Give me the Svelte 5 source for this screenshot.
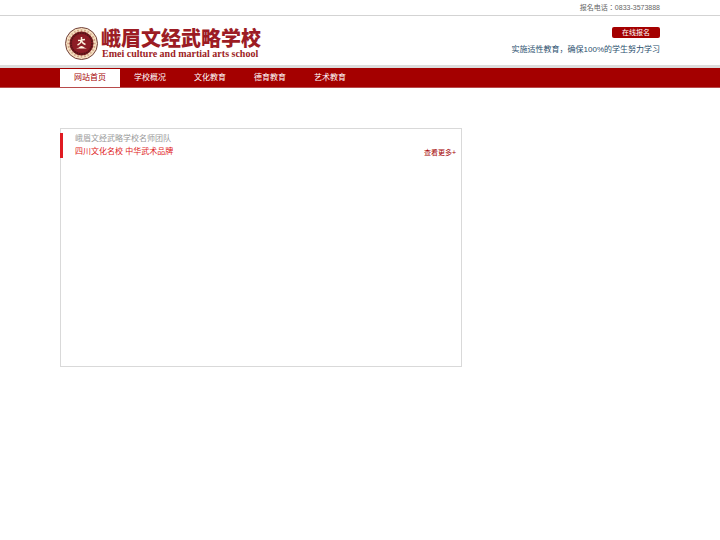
<script>
	const phone = '0833-3573888';
	const menu = ['网站首页', '学校概况', '文化教育', '德育教育', '艺术教育'];
	let current = $state(0);

	const ticks = Array.from({ length: 24 }, (_, i) => i * 15);
</script>

<div class="topbar">
	<div class="wrap">报名电话：{phone}</div>
</div>

<header>
	<div class="wrap head">
		<a class="logo" href="#home">
			<svg viewBox="0 0 66 66" aria-hidden="true">
				<circle cx="33" cy="33" r="32" fill="#f6dfc0" stroke="#70403a" stroke-width="2" />
				{#each ticks as angle}
					<path d="M31 6h4M33 5v5M31 9h4" stroke="#b98468" stroke-width="1" transform="rotate({angle} 33 33)" />
				{/each}
				<circle cx="33" cy="33" r="23" fill="#7c1920" stroke="#7c1920" stroke-width="2" />
				<circle cx="33" cy="33" r="21" fill="none" stroke="#4f1516" stroke-width="3" stroke-dasharray="3 2" />
				<circle cx="33" cy="33" r="19" fill="#8d1c25" />
				<path d="M33 20v6q-1 7-8 10M26 27l14-2M33 28q2 5 8 7" fill="none" stroke="#fff2df" stroke-width="3" />
				<path d="M22 43q6-1 8-4q3-2 6 0q3 3 8 4z" fill="#fff2df" />
			</svg>
			<span class="names">
				<strong>峨眉文经武略学校</strong>
				<span class="english">Emei culture and martial arts school</span>
			</span>
		</a>
		<div class="side">
			<button type="button">在线报名</button>
			<p>实施适性教育，确保100%的学生努力学习</p>
		</div>
	</div>
</header>

<nav>
	<ul class="wrap">
		{#each menu as item, i}
			<li>
				<a href="#menu{i}" class:active={current === i} onclick={() => (current = i)}>{item}</a>
			</li>
		{/each}
	</ul>
</nav>

<main class="wrap">
	<section class="team">
		<div class="title">
			<div class="lines">
				<p>峨眉文经武略学校名师团队</p>
				<h2>四川文化名校 中华武术品牌</h2>
			</div>
			<a href="#more">查看更多+</a>
		</div>
	</section>
</main>

<style>
	:global(body) {
		background: #fff;
		font-family: "Liberation Sans", "Noto Sans CJK SC", sans-serif;
		font-size: 8px;
		color: #666;
	}
	p, h2, ul {
		margin: 0;
		padding: 0;
		font-weight: normal;
	}
	a {
		text-decoration: none;
	}
	.wrap {
		box-sizing: border-box;
		width: calc(100% - 120px);
		max-width: 1200px;
		margin: 0 auto;
	}
	.topbar {
		border-bottom: 1px solid #d3d3d3;
		font-family: "Liberation Sans", "Noto Sans CJK TC", sans-serif;
		font-size: 7px;
		line-height: 15px;
		text-align: right;
	}
	header {
		border-bottom: 3px solid #ddd;
	}
	.head {
		display: flex;
		justify-content: space-between;
		padding: 11px 0 5px;
	}
	.logo {
		display: flex;
		gap: 3px;
		padding-left: 5px;
		color: #9c1c24;
	}
	.logo svg {
		width: 33px;
		height: 33px;
	}
	.names {
		display: flex;
		flex-direction: column;
	}
	.names strong {
		font-family: "Noto Sans CJK SC", sans-serif;
		font-size: 20px;
		font-weight: 900;
		line-height: 22px;
	}
	.english {
		padding-left: 1px;
		font-family: "Liberation Serif", serif;
		font-size: 10px;
		font-weight: bold;
		line-height: 10px;
		white-space: nowrap;
	}
	.side {
		display: flex;
		flex-direction: column;
		align-items: flex-end;
		gap: 5px;
		color: #2b4f6e;
		line-height: 13px;
	}
	button {
		padding: 0 10px;
		border: 0;
		border-radius: 2px;
		background: #a40000;
		color: #fff;
		font-family: inherit;
		font-size: 7px;
		line-height: 11px;
		cursor: pointer;
	}
	nav {
		background: #a40000;
		border-bottom: 1px solid #b84b4b;
	}
	nav ul {
		display: flex;
		padding-top: 1px;
		list-style: none;
	}
	nav a {
		display: block;
		width: 60px;
		color: #fff;
		line-height: 18px;
		text-align: center;
	}
	nav a.active {
		background: #fff;
		color: #a40000;
	}
	.team {
		box-sizing: border-box;
		width: 67%;
		min-height: 239px;
		margin-top: 40px;
		padding-top: 4px;
		border: 1px solid #d9d9d9;
	}
	.title {
		display: flex;
		align-items: flex-end;
		justify-content: space-between;
		margin-left: -1px;
		padding-right: 5px;
		border-left: 3px solid #e01b22;
	}
	.lines {
		display: flex;
		flex-direction: column;
		gap: 1px;
		padding-left: 12px;
	}
	.lines p, .lines h2 {
		font-size: 8px;
		line-height: 12px;
	}
	.lines p {
		color: #999;
	}
	.lines h2 {
		color: #e01b22;
	}
	.title a {
		color: #a40000;
		font-size: 7px;
		line-height: 10px;
	}
</style>
